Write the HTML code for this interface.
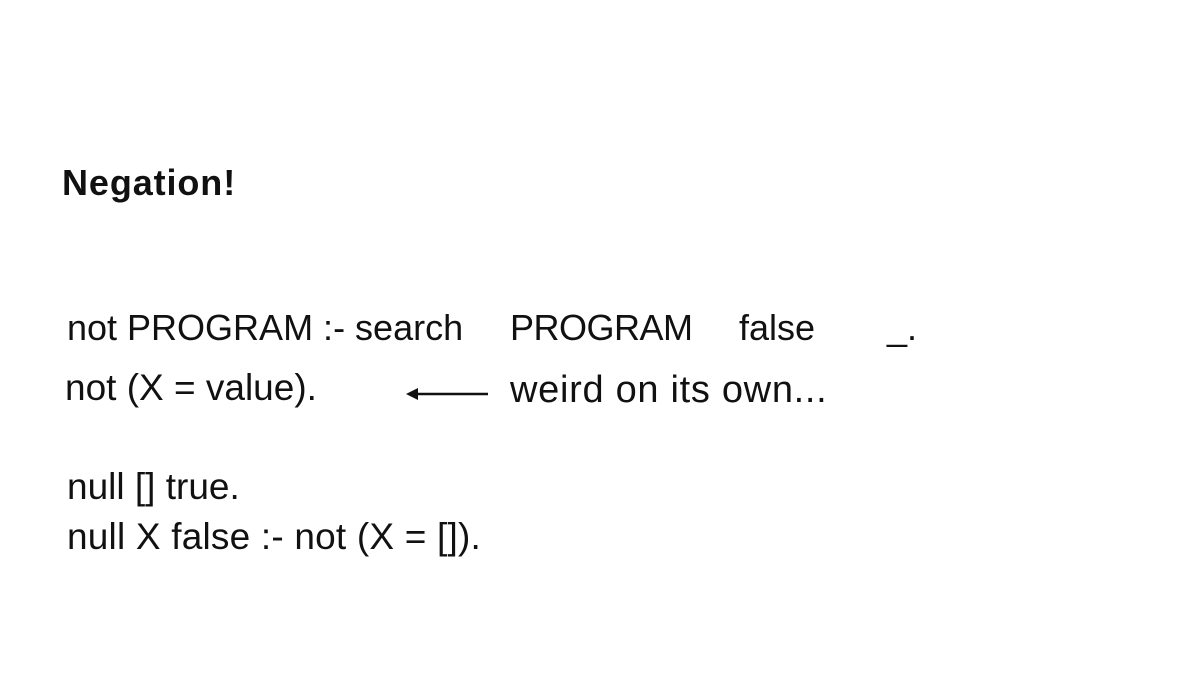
<!DOCTYPE html>
<html><head><meta charset="utf-8"><style>
html,body{margin:0;padding:0;background:#fff;}
body{width:1200px;height:675px;position:relative;overflow:hidden;font-family:"Liberation Sans",sans-serif;color:#111;}
.t{position:absolute;white-space:pre;font-size:36px;line-height:1;}
.h{font-weight:bold;font-size:36px;letter-spacing:0.9px;}
</style></head><body>
<div class="t h" style="left:62px;top:165px;">Negation!</div>
<div class="t" style="left:67px;top:310px;">not PROGRAM :- search</div>
<div class="t" style="left:510px;top:310px;letter-spacing:-0.5px">PROGRAM</div>
<div class="t" style="left:739px;top:310px;">false</div>
<div class="t" style="left:887px;top:310px;">_.</div>
<div class="t" style="left:65px;top:369px;font-size:37px;">not (X = value).</div>
<svg style="position:absolute;left:400px;top:384px" width="95" height="20"><line x1="14" y1="10" x2="88" y2="10" stroke="#111" stroke-width="2.5"/><polygon points="6,10 18,4 18,16" fill="#111"/></svg>
<div class="t" style="left:510px;top:371px;font-size:38px;letter-spacing:0.7px">weird on its own...</div>
<div class="t" style="left:67px;top:468px;font-size:37px;">null [] true.</div>
<div class="t" style="left:67px;top:518px;font-size:37px;letter-spacing:0.2px">null X false :- not (X = []).</div>
</body></html>
